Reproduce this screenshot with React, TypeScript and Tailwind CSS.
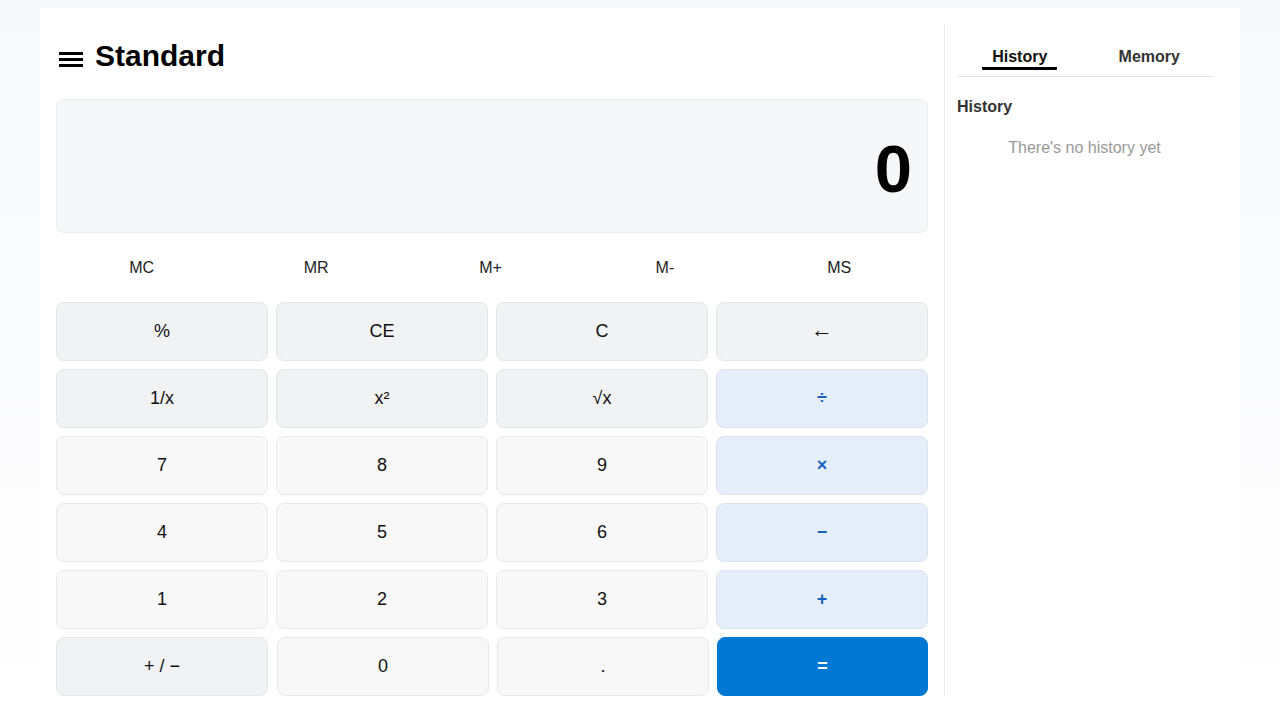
import React from "react";

type Kind = "fn" | "num" | "op" | "eq";

const kindClass: Record<Kind, string> = {
  fn: "bg-[#f1f2f4] border-[#e4e6e9] text-[#111] font-normal",
  num: "bg-[#f8f8f9] border-[#e8e9eb] text-[#111] font-normal",
  op: "bg-[#e6eff9] border-[#d9e4f1] text-[#1565c0] font-bold",
  eq: "bg-[#0078d4] border-[#0078d4] text-white font-bold",
};

function Key({ label, kind, className = "" }: { label: string; kind: Kind; className?: string }) {
  return (
    <button
      className={`h-[59px] rounded-lg border text-[18px] flex items-center justify-center ${kindClass[kind]} ${className}`}
    >
      {label}
    </button>
  );
}

const rows: { label: string; kind: Kind }[][] = [
  [
    { label: "%", kind: "fn" },
    { label: "CE", kind: "fn" },
    { label: "C", kind: "fn" },
    { label: "←", kind: "fn" },
  ],
  [
    { label: "1/x", kind: "fn" },
    { label: "x²", kind: "fn" },
    { label: "√x", kind: "fn" },
    { label: "÷", kind: "op" },
  ],
  [
    { label: "7", kind: "num" },
    { label: "8", kind: "num" },
    { label: "9", kind: "num" },
    { label: "×", kind: "op" },
  ],
  [
    { label: "4", kind: "num" },
    { label: "5", kind: "num" },
    { label: "6", kind: "num" },
    { label: "−", kind: "op" },
  ],
  [
    { label: "1", kind: "num" },
    { label: "2", kind: "num" },
    { label: "3", kind: "num" },
    { label: "+", kind: "op" },
  ],
];

export default function App() {
  return (
    <div
      className="min-h-screen bg-gradient-to-b from-[#f7f8fb] to-white pt-2 px-10"
      style={{ fontFamily: '"Liberation Sans", Arial, Helvetica, sans-serif' }}
    >
      <div className="bg-white flex py-4 w-[1200px]">
        {/* Left: calculator */}
        <div className="w-[904px] px-4 shrink-0">
          <div className="h-[67px] flex items-center">
            <div className="ml-[3px] w-6 flex flex-col gap-[3px] mt-[4px]">
              <div className="h-[3px] bg-black" />
              <div className="h-[3px] bg-black" />
              <div className="h-[3px] bg-black" />
            </div>
            <h1 className="ml-3 -mt-1 text-[30px] font-bold text-black leading-none">Standard</h1>
          </div>

          <div className="mt-2 h-[134px] rounded-lg bg-[#f6f7f9] border border-[#eceef1] flex items-center justify-end pr-[15px]">
            <span className="text-[67px] font-bold text-black leading-none mt-1">0</span>
          </div>

          <div className="h-[69px] grid grid-cols-5 items-center text-base text-[#222]">
            {["MC", "MR", "M+", "M-", "MS"].map((m) => (
              <div key={m} className="text-center pr-[3px]">
                {m}
              </div>
            ))}
          </div>

          <div className="flex flex-col gap-2">
            {rows.map((row, i) => (
              <div key={i} className="grid grid-cols-4 gap-2">
                {row.map((k) => (
                  <Key
                    key={k.label}
                    label={k.label}
                    kind={k.kind}
                    className={k.label === "←" ? "!text-[22px] !font-bold pb-[5px]" : ""}
                  />
                ))}
              </div>
            ))}
            <div className="flex">
              <Key label="+ / −" kind="fn" className="w-[212px]" />
              <Key label="0" kind="num" className="w-[212px] ml-[9px]" />
              <Key label="." kind="num" className="w-[212px] ml-2" />
              <Key label="=" kind="eq" className="w-[211px] ml-2" />
            </div>
          </div>
        </div>

        {/* Right: history panel */}
        <div className="flex-1 border-l border-[#ececec] pl-3 pr-7 pt-[24px]">
          <div className="flex gap-1 border-b border-[#e2e2e2] pb-[6px]">
            <div className="flex-1 flex justify-center">
              <span className="px-[10px] pb-[1px] border-b-[3px] border-black rounded-[1px] text-base font-bold leading-[18px] text-[#111]">
                History
              </span>
            </div>
            <div className="flex-1 flex justify-center">
              <span className="px-[10px] pb-[1px] border-b-[3px] border-transparent text-base font-bold leading-[18px] text-[#333]">
                Memory
              </span>
            </div>
          </div>
          <div className="mt-[21px] text-base font-bold leading-[18px] text-[#333]">History</div>
          <div className="mt-[23px] text-base leading-[18px] text-[#999] text-center">
            There's no history yet
          </div>
        </div>
      </div>
    </div>
  );
}
